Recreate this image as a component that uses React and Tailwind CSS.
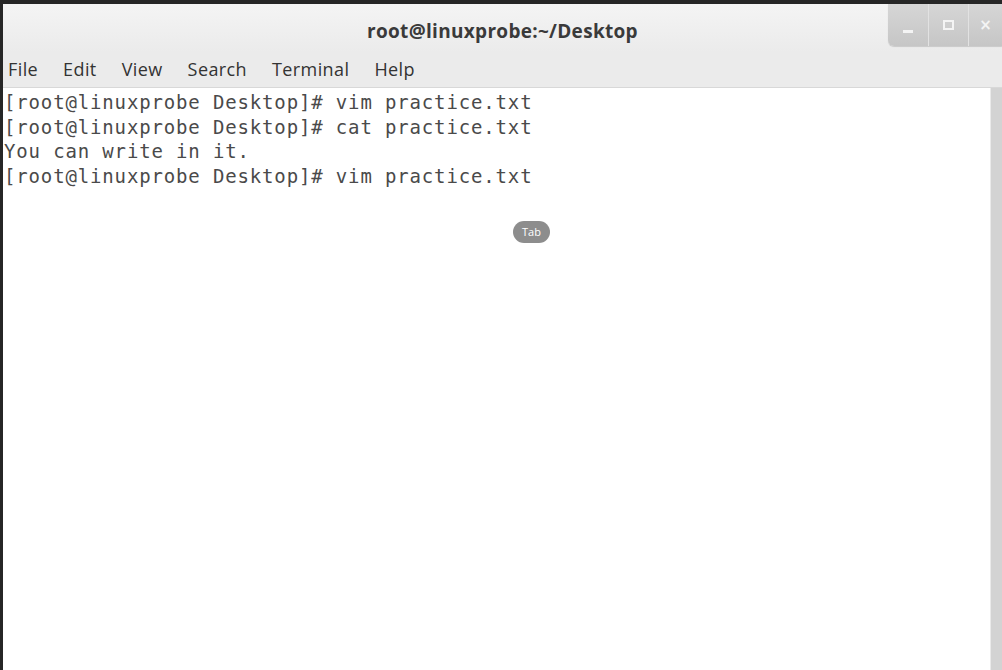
export default function App() {
  const lines = [
    '[root@linuxprobe Desktop]# vim practice.txt',
    '[root@linuxprobe Desktop]# cat practice.txt',
    'You can write in it.',
    '[root@linuxprobe Desktop]# vim practice.txt',
  ];
  const menu = ['File', 'Edit', 'View', 'Search', 'Terminal', 'Help'];

  return (
    <div className="flex h-[670px] w-[1002px] flex-col overflow-hidden border-t-4 border-l-[3px] border-[#262626] bg-white">
      {/* title bar */}
      <div className="relative flex h-[48px] shrink-0 items-center justify-center bg-gradient-to-b from-[#f4f4f4] to-[#ebebeb]">
        <span className="pt-[6px] font-['Open_Sans',sans-serif] text-[19px] font-bold tracking-[0.3px] text-[#3a3a3a]">
          root@linuxprobe:~/Desktop
        </span>
        <div className="absolute top-0 right-0 flex h-[42px] overflow-hidden rounded-bl-[6px] bg-gradient-to-b from-[#d6d6d6] to-[#c6c6c6] shadow-[0_1px_1px_rgba(0,0,0,0.15)]">
          <div className="flex w-[40px] items-end justify-center pb-[13px]">
            <div className="h-[3px] w-[10px] bg-[#f4f4f4]" />
          </div>
          <div className="flex w-[40px] items-center justify-center border-l border-[#e2e2e2]">
            <div className="h-[10px] w-[11px] border-[2px] border-[#f4f4f4]" />
          </div>
          <div className="flex w-[34px] items-center justify-center border-l border-[#e2e2e2] font-['DejaVu_Sans',sans-serif] text-[15px] font-bold text-[#f4f4f4]">
            ×
          </div>
        </div>
      </div>

      {/* menu bar */}
      <div className="flex h-[36px] shrink-0 items-center gap-[25px] border-b border-[#d8d8d8] bg-[#ebebeb] pl-[5px] font-['Open_Sans',sans-serif] text-[18px] tracking-[0.4px] text-[#333]">
        {menu.map((m) => (
          <span key={m}>{m}</span>
        ))}
      </div>

      {/* terminal */}
      <div className="flex min-h-0 flex-1">
        <div className="relative flex-1 pt-[2px] pl-[1px]">
          {lines.map((l, i) => (
            <div
              key={i}
              className="h-[24.5px] whitespace-pre font-['DejaVu_Sans_Mono',monospace] text-[19px] leading-[24.5px] tracking-[0.85px] text-[#4a4a4a]"
            >
              {l}
            </div>
          ))}
          <div className="absolute top-[133px] left-[510px] flex h-[22px] w-[37px] items-center justify-center rounded-full bg-[#8d8d8d] font-['Open_Sans',sans-serif] text-[11px] text-white">
            Tab
          </div>
        </div>
        <div className="w-[12px] shrink-0 border-l border-[#eaeaea] bg-[#d3d3d3]" />
      </div>
    </div>
  );
}
